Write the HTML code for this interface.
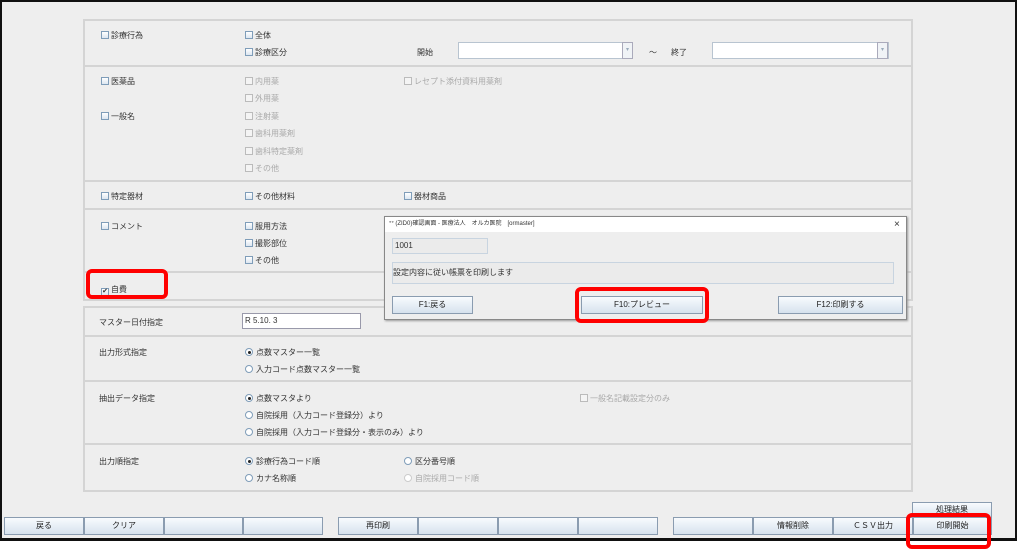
<!DOCTYPE html>
<html><head><meta charset="utf-8"><style>
*{margin:0;padding:0;box-sizing:border-box}
body{width:1018px;height:547px;background:#fff;font-family:"Liberation Sans","Noto Sans CJK JP",sans-serif;font-size:8px;color:#333;position:relative;overflow:hidden}
.a{position:absolute;white-space:nowrap}
.frame{position:absolute;left:0;top:0;width:1017px;height:541px;border:2px solid #111;border-bottom:3px solid #111;background:#eeeeee}
.hl{position:absolute;height:2px;background:#d4d4d4}
.cb{display:inline-block;width:8px;height:8px;border:1px solid #7f9db9;background:linear-gradient(#fff,#dce6f0);vertical-align:-1px;margin-right:2px}
.cb.d{border-color:#bbb;background:#f4f4f4}
.g{color:#aaa}
.rd{display:inline-block;width:8px;height:8px;border:1px solid #7f9db9;border-radius:50%;background:#fff;vertical-align:-1px;margin-right:3px;position:relative}
.rd.on::after{content:"";position:absolute;left:1.5px;top:1.5px;width:3px;height:3px;border-radius:50%;background:#222}
.btn{position:absolute;height:18px;border:1px solid #8a9cb0;background:linear-gradient(#f8fbfe,#d6e2ee);text-align:center;line-height:16px;font-size:8px;color:#222}
.red{position:absolute;border:4px solid #f00;border-radius:6px}
.inp{position:absolute;background:#fff;border:1px solid #b8c4d0}
</style></head><body>
<div class="frame"></div>
<!-- panel 1 -->
<div class="a" style="left:83px;top:19px;width:830px;height:282px;border:2px solid #d4d4d4"></div>
<div class="hl" style="left:84px;top:65px;width:828px"></div>
<div class="hl" style="left:84px;top:180px;width:828px"></div>
<div class="hl" style="left:84px;top:208px;width:828px"></div>
<div class="hl" style="left:84px;top:271px;width:828px"></div>
<div class="a" style="left:101px;top:30px"><span class="cb"></span>診療行為</div>
<div class="a" style="left:245px;top:30px"><span class="cb"></span>全体</div>
<div class="a" style="left:245px;top:47px"><span class="cb"></span>診療区分</div>
<div class="a" style="left:417px;top:47px">開始</div>
<div class="inp" style="left:458px;top:42px;width:175px;height:17px"></div>
<div class="a" style="left:622px;top:42px;width:11px;height:17px;border:1px solid #aab;background:#f0f3f6;color:#9ab;font-size:6px;text-align:center;line-height:15px">▾</div>
<div class="a" style="left:649px;top:47px">～</div>
<div class="a" style="left:671px;top:47px">終了</div>
<div class="inp" style="left:712px;top:42px;width:177px;height:17px"></div>
<div class="a" style="left:877px;top:42px;width:11px;height:17px;border:1px solid #aab;background:#f0f3f6;color:#9ab;font-size:6px;text-align:center;line-height:15px">▾</div>

<div class="a" style="left:101px;top:76px"><span class="cb"></span>医薬品</div>
<div class="a" style="left:101px;top:111px"><span class="cb"></span>一般名</div>
<div class="a g" style="left:245px;top:76px"><span class="cb d"></span>内用薬</div>
<div class="a g" style="left:245px;top:93px"><span class="cb d"></span>外用薬</div>
<div class="a g" style="left:245px;top:111px"><span class="cb d"></span>注射薬</div>
<div class="a g" style="left:245px;top:128px"><span class="cb d"></span>歯科用薬剤</div>
<div class="a g" style="left:245px;top:146px"><span class="cb d"></span>歯科特定薬剤</div>
<div class="a g" style="left:245px;top:163px"><span class="cb d"></span>その他</div>
<div class="a g" style="left:404px;top:76px"><span class="cb d"></span>レセプト添付資料用薬剤</div>

<div class="a" style="left:101px;top:191px"><span class="cb"></span>特定器材</div>
<div class="a" style="left:245px;top:191px"><span class="cb"></span>その他材料</div>
<div class="a" style="left:404px;top:191px"><span class="cb"></span>器材商品</div>

<div class="a" style="left:101px;top:221px"><span class="cb"></span>コメント</div>
<div class="a" style="left:245px;top:221px"><span class="cb"></span>服用方法</div>
<div class="a" style="left:245px;top:238px"><span class="cb"></span>撮影部位</div>
<div class="a" style="left:245px;top:255px"><span class="cb"></span>その他</div>
<div class="a" style="left:101px;top:284px"><span class="cb" style="text-align:center;line-height:6px;font-size:7px">✔</span>自費</div>
<div class="red" style="left:86px;top:269px;width:82px;height:30px"></div>

<!-- panel 2 -->
<div class="a" style="left:83px;top:306px;width:830px;height:186px;border:2px solid #d4d4d4"></div>
<div class="hl" style="left:84px;top:335px;width:828px"></div>
<div class="hl" style="left:84px;top:380px;width:828px"></div>
<div class="hl" style="left:84px;top:443px;width:828px"></div>
<div class="a" style="left:99px;top:317px">マスター日付指定</div>
<div class="inp" style="left:242px;top:313px;width:119px;height:16px;border-color:#99a;padding-left:2px;line-height:14px">R 5.10. 3</div>
<div class="a" style="left:99px;top:347px">出力形式指定</div>
<div class="a" style="left:245px;top:347px"><span class="rd on"></span>点数マスター一覧</div>
<div class="a" style="left:245px;top:364px"><span class="rd"></span>入力コード点数マスター一覧</div>
<div class="a" style="left:99px;top:393px">抽出データ指定</div>
<div class="a" style="left:245px;top:393px"><span class="rd on"></span>点数マスタより</div>
<div class="a" style="left:245px;top:410px"><span class="rd"></span>自院採用（入力コード登録分）より</div>
<div class="a" style="left:245px;top:427px"><span class="rd"></span>自院採用（入力コード登録分・表示のみ）より</div>
<div class="a g" style="left:580px;top:393px"><span class="cb d"></span>一般名記載設定分のみ</div>
<div class="a" style="left:99px;top:456px">出力順指定</div>
<div class="a" style="left:245px;top:456px"><span class="rd on"></span>診療行為コード順</div>
<div class="a" style="left:245px;top:473px"><span class="rd"></span>カナ名称順</div>
<div class="a" style="left:404px;top:456px"><span class="rd"></span>区分番号順</div>
<div class="a g" style="left:404px;top:473px"><span class="rd" style="border-color:#ccc"></span>自院採用コード順</div>

<!-- dialog -->
<div class="a" style="left:384px;top:216px;width:523px;height:104px;border:1px solid #888;background:#eeeeee;box-shadow:1px 1px 2px #999"></div>
<div class="a" style="left:385px;top:217px;width:521px;height:15px;background:#fff;font-size:6px;line-height:15px;padding-left:4px">ᐤᐤ (ZID0)確認画面 - 医療法人　オルカ医院　[ormaster]</div>
<div class="a" style="left:894px;top:217px;font-size:10px;line-height:15px">×</div>
<div class="a" style="left:392px;top:238px;width:96px;height:16px;border:1px solid #c8d4e0;background:#ebebeb;padding-left:2px;line-height:14px">1001</div>
<div class="a" style="left:392px;top:262px;width:502px;height:22px;border:1px solid #c8d4e0;background:#ebebeb;line-height:20px">設定内容に従い帳票を印刷します</div>
<div class="btn" style="left:392px;top:296px;width:81px">F1:戻る</div>
<div class="btn" style="left:581px;top:296px;width:122px">F10:プレビュー</div>
<div class="btn" style="left:778px;top:296px;width:125px">F12:印刷する</div>
<div class="red" style="left:575px;top:287px;width:134px;height:36px"></div>

<!-- bottom buttons -->
<div class="btn" style="left:912px;top:502px;width:80px;height:16px;line-height:14px">処理結果</div>
<div class="btn" style="left:4px;top:517px;width:80px">戻る</div>
<div class="btn" style="left:84px;top:517px;width:80px">クリア</div>
<div class="btn" style="left:164px;top:517px;width:79px"></div>
<div class="btn" style="left:243px;top:517px;width:80px"></div>
<div class="btn" style="left:338px;top:517px;width:80px">再印刷</div>
<div class="btn" style="left:418px;top:517px;width:80px"></div>
<div class="btn" style="left:498px;top:517px;width:80px"></div>
<div class="btn" style="left:578px;top:517px;width:80px"></div>
<div class="btn" style="left:673px;top:517px;width:80px"></div>
<div class="btn" style="left:753px;top:517px;width:80px">情報削除</div>
<div class="btn" style="left:833px;top:517px;width:80px">ＣＳＶ出力</div>
<div class="btn" style="left:913px;top:517px;width:79px">印刷開始</div>
<div class="red" style="left:906px;top:513px;width:85px;height:36px"></div>
</body></html>
